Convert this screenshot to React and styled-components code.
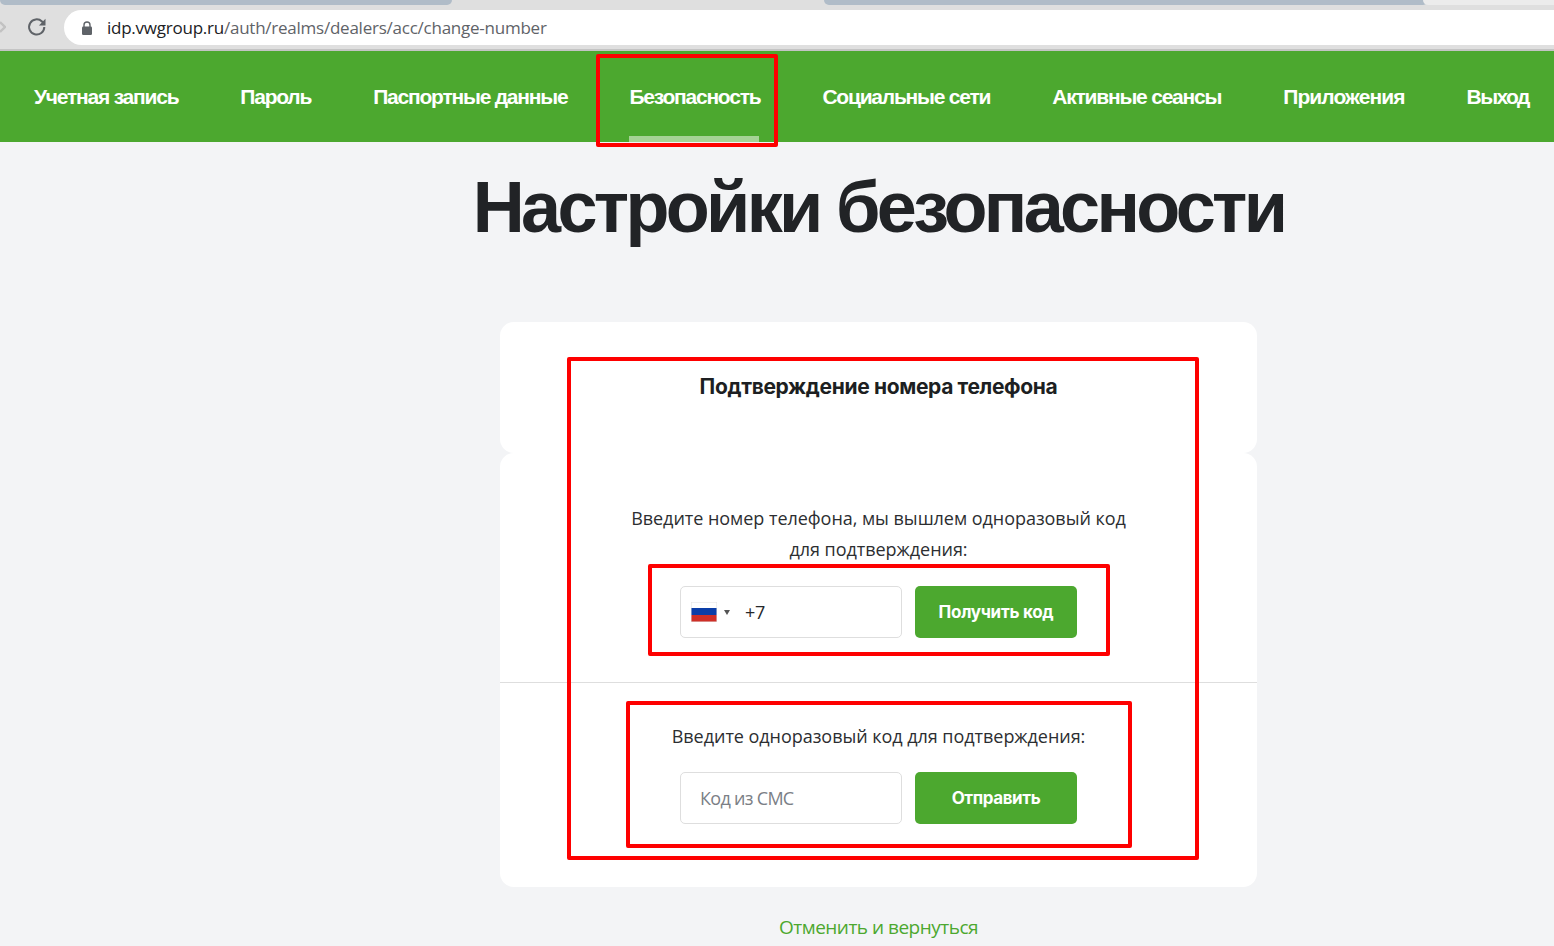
import React from "react";
import styled, { createGlobalStyle } from "styled-components";

const GlobalStyle = createGlobalStyle`
  * { box-sizing: border-box; }
  html, body { margin: 0; padding: 0; background: #f3f4f6; overflow: hidden; }
  body { font-family: "Inter", "Liberation Sans", sans-serif; }
`;

const Page = styled.div`
  width: 1554px;
  height: 946px;
  position: relative;
  overflow: hidden;
  background: #f3f4f6;
`;

const TabStrip = styled.div`
  height: 10px;
  background: #dfdfdf;
  display: flex;
  align-items: flex-start;
`;

const TabPiece = styled.div`
  height: 5px;
  width: ${(p) => p.$width}px;
  margin-left: ${(p) => p.$left}px;
  background: ${(p) => p.$color};
  border-radius: ${(p) => p.$radius || "0 0 8px 8px"};
`;

const AddressRow = styled.div`
  height: 41px;
  background: #dfdfdf;
  border-bottom: 2px solid #c4c4c4;
  display: flex;
  align-items: flex-start;
`;

const BackTip = styled.svg`
  width: 6px;
  height: 12px;
  margin-top: 11px;
  margin-right: 21px;
`;

const ReloadIcon = styled.svg`
  width: 20px;
  height: 20px;
  margin-top: 7px;
  margin-right: 17px;
`;

const UrlBar = styled.div`
  flex: 1;
  height: 35px;
  background: #fff;
  border-radius: 18px 0 0 18px;
  display: flex;
  align-items: center;
  padding-left: 17px;
  font-family: "Open Sans", "Liberation Sans", sans-serif;
  font-size: 17px;
  letter-spacing: -0.24px;
  color: #5f6368;
`;

const Lock = styled.svg`
  width: 12px;
  height: 14px;
  margin-right: 14px;
`;

const Host = styled.span`
  color: #202124;
`;

const Nav = styled.nav`
  height: 91px;
  background: #4ca82f;
  display: flex;
  padding-left: 34px;
  gap: 62px;
`;

const NavItem = styled.a`
  position: relative;
  display: flex;
  align-items: center;
  height: 91px;
  font-family: "Liberation Sans", sans-serif;
  font-size: 21px;
  font-weight: 700;
  letter-spacing: ${(p) => p.$spacing || "-1.22px"};
  color: #fff;
  white-space: nowrap;
  ${(p) =>
    p.$active &&
    `&::after {
      content: "";
      position: absolute;
      left: 0;
      right: 1px;
      bottom: 0;
      height: 6px;
      background: #a5d395;
    }`}
`;

const Main = styled.main`
  width: 757px;
  margin-left: 500px;
  display: flex;
  flex-direction: column;
  align-items: center;
`;

const Title = styled.h1`
  margin: 22px 0 0;
  height: 158px;
  white-space: nowrap;
  font-family: "Liberation Sans", sans-serif;
  font-size: 72px;
  line-height: 86px;
  font-weight: 700;
  letter-spacing: -3.66px;
  color: #212326;
`;

const TopCard = styled.section`
  width: 100%;
  height: 131px;
  background: #fff;
  border-radius: 14px;
  padding-top: 52px;
  text-align: center;
`;

const CardTitle = styled.h2`
  margin: 0;
  font-family: "Inter", "Liberation Sans", sans-serif;
  font-size: 21px;
  line-height: 26px;
  font-weight: 700;
  letter-spacing: -0.35px;
  color: #1d1f22;
`;

const BottomCard = styled.section`
  width: 100%;
  height: 434px;
  background: #fff;
  border-radius: 14px;
  text-align: center;
`;

const Block = styled.div`
  height: ${(p) => p.$height}px;
  padding-top: ${(p) => p.$top}px;
  border-bottom: ${(p) => (p.$divided ? "1px solid #dedede" : "none")};
`;

const Hint = styled.p`
  margin: 0;
  font-family: "Open Sans", "Liberation Sans", sans-serif;
  font-size: 18px;
  line-height: 31px;
  letter-spacing: -0.04px;
  color: #2c2e31;
`;

const FormRow = styled.div`
  display: flex;
  justify-content: center;
  gap: 13px;
  margin-top: ${(p) => p.$top}px;
`;

const Field = styled.div`
  width: 222px;
  height: 52px;
  background: #fff;
  border: 1px solid #dedede;
  border-radius: 5px;
  display: flex;
  align-items: center;
  padding-left: ${(p) => p.$left}px;
  font-family: "Open Sans", "Liberation Sans", sans-serif;
  font-size: 18px;
  letter-spacing: ${(p) => p.$spacing};
  color: ${(p) => p.$color};
`;

const Flag = styled.svg`
  width: 26px;
  height: 20px;
  margin-right: 7px;
`;

const Caret = styled.span`
  width: 0;
  height: 0;
  border-left: 3.5px solid transparent;
  border-right: 3.5px solid transparent;
  border-top: 5px solid #555;
  margin-right: 15px;
`;

const Button = styled.button`
  width: 162px;
  height: 52px;
  border: 0;
  border-radius: 5px;
  background: #4ca82f;
  color: #fff;
  font-family: "Inter", "Liberation Sans", sans-serif;
  font-size: 17px;
  font-weight: 700;
  letter-spacing: -0.27px;
`;

const SendButton = styled(Button)`
  letter-spacing: -0.4px;
`;

const CancelLink = styled.a`
  margin-top: 27px;
  font-family: "Open Sans", "Liberation Sans", sans-serif;
  font-size: 19px;
  line-height: 26px;
  letter-spacing: -0.5px;
  color: #4ca82f;
`;

// red boxes drawn over the screenshot
const Mark = styled.div`
  position: absolute;
  left: ${(p) => p.$x}px;
  top: ${(p) => p.$y}px;
  width: ${(p) => p.$w}px;
  height: ${(p) => p.$h}px;
  border: 4px solid #fe0000;
  border-radius: 2px;
  pointer-events: none;
`;

const items = [
  { label: "Учетная запись" },
  { label: "Пароль" },
  { label: "Паспортные данные" },
  { label: "Безопасность", active: true },
  { label: "Социальные сети" },
  { label: "Активные сеансы" },
  { label: "Приложения", spacing: "-0.92px" },
  { label: "Выход", spacing: "-1.6px" },
];

export default function App() {
  return (
    <Page>
      <GlobalStyle />
      <TabStrip>
        <TabPiece $left={0} $width={452} $color="#b0bcc8" />
        <TabPiece $left={372} $width={604} $color="#b0bcc8" />
        <TabPiece $left={-5} $width={131} $color="#ececec" $radius="0 0 0 8px" />
      </TabStrip>
      <AddressRow>
        <BackTip viewBox="0 0 6 12">
          <path d="M0 1l5 5-5 5" fill="none" stroke="#c2c2c2" strokeWidth="2.4" />
        </BackTip>
        <ReloadIcon viewBox="0 0 20 20" fill="none">
          <path d="M17.3 10a7.6 7.6 0 1 1-2.3-5.5l2.3 2.3" stroke="#5f6368" strokeWidth="2" />
          <path d="M18.5 1.8v6.6h-6.6z" fill="#5f6368" />
        </ReloadIcon>
        <UrlBar>
          <Lock viewBox="0 0 12 14">
            <path d="M3 6V4a3 3 0 0 1 6 0v2" fill="none" stroke="#5f6368" strokeWidth="1.4" />
            <rect x="1" y="5.5" width="10" height="8.5" rx="1.2" fill="#5f6368" />
          </Lock>
          <Host>idp.vwgroup.ru</Host>/auth/realms/dealers/acc/change-number
        </UrlBar>
      </AddressRow>
      <Nav>
        {items.map((item) => (
          <NavItem key={item.label} $active={item.active} $spacing={item.spacing}>
            {item.label}
          </NavItem>
        ))}
      </Nav>
      <Main>
        <Title>Настройки безопасности</Title>
        <TopCard>
          <CardTitle>Подтверждение номера телефона</CardTitle>
        </TopCard>
        <BottomCard>
          <Block $height={230} $top={50} $divided>
            <Hint>
              Введите номер телефона, мы вышлем одноразовый код
              <br />
              для подтверждения:
            </Hint>
            <FormRow $top={21}>
              <Field $left={10} $color="#26282b" $spacing="-0.3px">
                <Flag viewBox="0 0 26 20">
                  <rect width="26" height="20" fill="#fff" />
                  <rect y="6" width="26" height="7" fill="#0b3ea8" />
                  <rect y="13" width="26" height="7" fill="#cf2f27" />
                  <rect x="0.25" y="0.25" width="25.5" height="19.5" fill="none" stroke="#e2e2e2" strokeWidth="0.5" />
                </Flag>
                <Caret />
                +7
              </Field>
              <Button>Получить код</Button>
            </FormRow>
          </Block>
          <Block $height={204} $top={38}>
            <Hint>Введите одноразовый код для подтверждения:</Hint>
            <FormRow $top={20}>
              <Field $left={19} $color="#7b8086" $spacing="-0.7px">Код из СМС</Field>
              <SendButton>Отправить</SendButton>
            </FormRow>
          </Block>
        </BottomCard>
        <CancelLink>Отменить и вернуться</CancelLink>
      </Main>
      <Mark $x={596} $y={54} $w={182} $h={93} />
      <Mark $x={567} $y={357} $w={632} $h={503} />
      <Mark $x={648} $y={564} $w={462} $h={92} />
      <Mark $x={626} $y={701} $w={506} $h={147} />
    </Page>
  );
}
